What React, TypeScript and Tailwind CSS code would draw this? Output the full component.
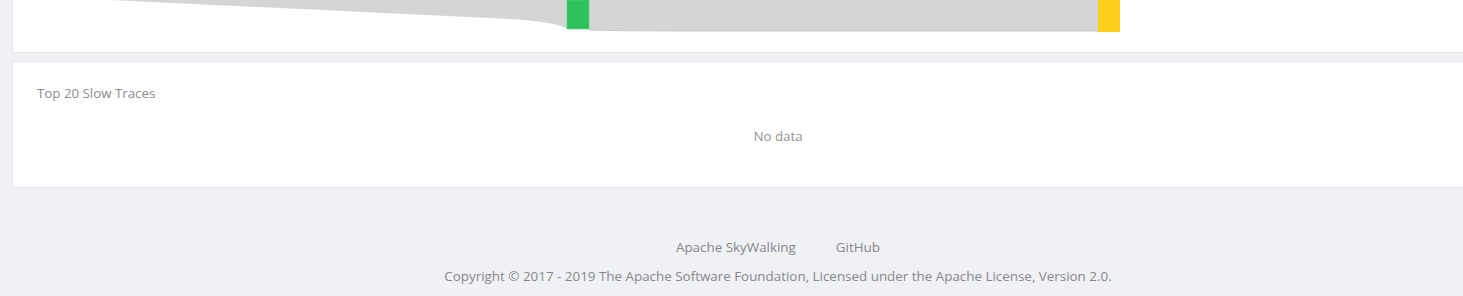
const font = { fontFamily: '"Open Sans", "Noto Sans", sans-serif' };

function TraceFlow() {
    // phần dưới của biểu đồ sankey (bị cắt ở trên)
    return (
        <svg width="1532" height="52" className="block">
            <path d="M97,0 L507,19.5 Q547,23 554,29 L554,0 Z" fill="#d5d5d5" />
            <path d="M576,0 L1085,0 L1085,31 L700,31 C620,31 590,30.5 576,30 Z" fill="#d5d5d5" />
            <path d="M576,30 C590,30.5 620,31 700,31 L1085,31" fill="none" stroke="#c9c9c9" strokeWidth="1" />
            <rect x="554" y="0" width="22" height="29" fill="#2ec25b" stroke="#5ad37e" strokeWidth="0.6" />
            <rect x="1085" y="0" width="22" height="32" fill="#fbcf1a" />
        </svg>
    );
}

export default function App() {
    return (
        <div className="w-full h-[296px] overflow-hidden bg-[#f0f1f4]" style={font}>
            <div className="w-[1532px] ml-[12px]">
                <div className="bg-white border-x border-b border-[#e4e5e8] h-[53px]">
                    <TraceFlow />
                </div>

                <div className="mt-[8px] bg-white border border-[#e4e5e8] h-[127px] pt-[23px] px-[24px]">
                    <div className="text-[13.3px] leading-[17px] text-[#8b8c90]">Top 20 Slow Traces</div>
                    <div className="mt-[26px] text-center text-[13.3px] leading-[17px] text-[#909399]">No data</div>
                </div>

                <div className="pt-[50px] text-center text-[#86878c]">
                    <div className="flex justify-center gap-[40px] text-[13.4px] leading-[18px]">
                        <a>Apache SkyWalking</a>
                        <a>GitHub</a>
                    </div>
                    <div className="mt-[11px] text-[13.4px] leading-[18px]">
                        Copyright © 2017 - 2019 The Apache Software Foundation, Licensed under the Apache License, Version 2.0.
                    </div>
                </div>
            </div>
        </div>
    );
}
